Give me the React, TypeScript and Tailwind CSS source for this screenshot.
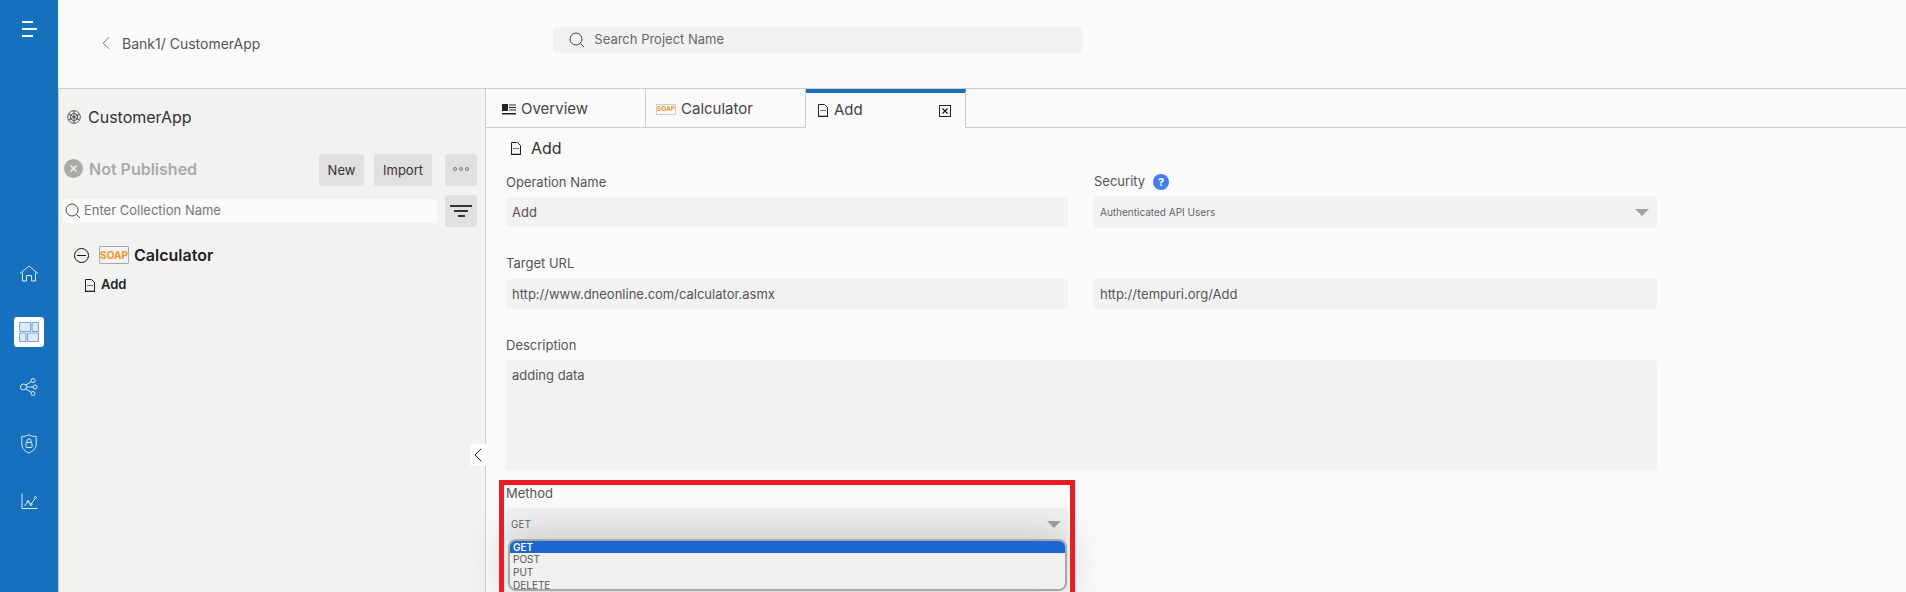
import { ChevronLeft } from "lucide-react";

function Field({ label, value, labelGap = "mt-[6px]" }: { label: string; value: string; labelGap?: string }) {
  return (
    <div>
      <div className="h-[18px] text-[13px] leading-[18px] text-[#555]">{label}</div>
      <div className={labelGap + " h-[30px] rounded-[3px] bg-[#f2f2f2] px-[6px] text-[13px] leading-[30px] text-[#555]"}>{value}</div>
    </div>
  );
}

function Caret() {
  return <div className="h-0 w-0 border-x-[7px] border-t-[7px] border-x-transparent border-t-[#a3a3a3]" />;
}

function SoapIcon({ small }: { small?: boolean }) {
  return (
    <span
      className={
        small
          ? "flex h-[11px] w-[20px] items-center justify-center border border-[#ccc] text-[6.5px] font-bold leading-none text-[#f7941d]"
          : "flex h-[18px] w-[30px] items-center justify-center rounded-[1px] border border-[#aaa] text-[10px] font-bold leading-none text-[#f7941d]"
      }
    >
      SOAP
    </span>
  );
}

function SearchIcon() {
  return (
    <svg width="16" height="16" viewBox="0 0 16 16" fill="none" stroke="#444" strokeWidth="1">
      <circle cx="7" cy="7" r="6" />
      <path d="M11.5 11.5 15 15" />
    </svg>
  );
}

function DocIcon() {
  return (
    <svg width="12" height="13" viewBox="0 0 12 13" fill="none" stroke="#222" strokeWidth="1">
      <path d="M1.5 12.5V.5h6l3 3v9z" />
      <path d="M1 12.5h10" strokeWidth="1.6" />
      <path d="M3 6.5h6" stroke="#777" />
    </svg>
  );
}

function NavIcon({ children, active }: { children: React.ReactNode; active?: boolean }) {
  return (
    <div className={active ? "-mb-[2px] mt-[2px] flex h-[30px] w-[30px] items-center justify-center rounded-[3px] bg-white" : "flex h-[30px] w-[30px] items-center justify-center"}>
      {children}
    </div>
  );
}

export default function App() {
  return (
    <div className="flex h-[592px] w-[1906px] overflow-hidden bg-[#fafafa] font-['Inter',sans-serif]">
      {/* Blue rail */}
      <aside className="flex w-[58px] shrink-0 flex-col items-center bg-[#1570bd]">
        <div className="mt-[21px] flex w-[15px] flex-col items-end gap-[5px]">
          <div className="h-[2px] w-[11px] self-start bg-white" />
          <div className="h-[2px] w-[15px] bg-white" />
          <div className="h-[2px] w-[11px] self-start bg-white" />
        </div>
        <div className="mt-[221px] flex flex-col items-center gap-[27px]">
          <NavIcon>
            <svg width="20" height="17" viewBox="0 0 20 17" fill="none" stroke="#dbeafe" strokeWidth="1">
              <path d="M1 8.5 10 1l9 7.500" />
              <path d="M3.500 7.500V16H7.500V10.500h5V16H16.500V7.500" />
            </svg>
          </NavIcon>
          <NavIcon active>
            <svg width="20" height="20" viewBox="0 0 20 20" fill="#dceafa" stroke="#7aa9d8" strokeWidth="1.200">
              <rect x="0.500" y="0.500" width="11" height="9" rx="1" />
              <rect x="13" y="0.500" width="6.500" height="9" rx="1" />
              <rect x="0.500" y="11" width="6.500" height="8.500" rx="1" />
              <rect x="8.500" y="11" width="11" height="8.500" rx="1" />
            </svg>
          </NavIcon>
          <NavIcon>
            <svg width="18" height="18" viewBox="0 0 18 18" fill="none" stroke="#dbeafe" strokeWidth="1">
              <circle cx="3.500" cy="9" r="3" />
              <circle cx="13" cy="2.500" r="2" />
              <circle cx="15" cy="9" r="2" />
              <circle cx="13" cy="15.500" r="2" />
              <path d="M6.500 9H13M5.800 7 11.400 3.700M5.800 11l5.600 3.300" />
            </svg>
          </NavIcon>
          <NavIcon>
            <svg width="16" height="20" viewBox="0 0 16 20" fill="none" stroke="#dbeafe" strokeWidth="1">
              <path d="M8 .800C5.500 2 3 2.500.800 2.500V10c0 4.500 3.500 7.500 7.200 9 3.700-1.500 7.200-4.500 7.200-9V2.500C13 2.500 10.500 2 8 .800z" />
              <rect x="5" y="8.500" width="6" height="5" rx="1" />
              <path d="M6 8.500V6.800a2 2 0 0 1 4 0v1.700" />
            </svg>
          </NavIcon>
          <NavIcon>
            <svg width="17" height="17" viewBox="0 0 17 17" fill="none" stroke="#dbeafe" strokeWidth="1">
              <path d="M1 .500V15.500H16.500" />
              <path d="M3.500 13 7 8.500l3 3 4-6" />
              <circle cx="7" cy="8.500" r="1" />
              <circle cx="10" cy="11.500" r="1" />
              <circle cx="14.500" cy="4.500" r="1" />
            </svg>
          </NavIcon>
        </div>
      </aside>

      <div className="flex min-w-0 flex-1 flex-col">
        {/* Top bar */}
        <header className="flex h-[89px] shrink-0 border-b border-[#ccc] bg-[#fafafa]">
          <div className="mt-[33px] flex h-[20px] items-center pl-[37px]">
            <ChevronLeft size={22} strokeWidth={0.9} className="text-[#555]" />
            <span className="ml-[5px] text-[14px] text-[#555]">Bank1/ CustomerApp</span>
          </div>
          <div className="ml-[293px] mt-[27px] flex h-[26px] w-[529px] items-center rounded-[4px] bg-[#f2f2f2] pl-[16px]">
            <SearchIcon />
            <span className="ml-[9px] text-[13px] text-[#666]">Search Project Name</span>
          </div>
        </header>

        <div className="flex min-h-0 flex-1">
          {/* Collection sidebar */}
          <section className="w-[427px] shrink-0 border-l border-[#ccc] bg-[#f2f2f2] pl-[4px]">
            <div className="mt-[18px] flex h-[20px] items-center pl-[4px]">
              <svg width="14" height="14" viewBox="0 0 14 14" fill="none" stroke="#444" strokeWidth="0.900">
                <circle cx="7" cy="7" r="6.300" />
                <path d="M7 3 10.500 5v4L7 11 3.500 9V5z" />
                <path d="M7 .700V3M7 11v2.300M1.500 4 3.500 5M10.500 9l2 1M1.500 10l2-1M10.500 5l2-1M7 3v8M3.500 5l7 4M10.500 5l-7 4" />
              </svg>
              <span className="ml-[7px] text-[16px] text-[#333]">CustomerApp</span>
            </div>
            <div className="mt-[27px] flex h-[32px] w-[414px] items-center pl-[1px]">
              <svg className="mb-[3px]" width="19" height="19" viewBox="0 0 19 19">
                <circle cx="9.500" cy="9.500" r="9.500" fill="#aaa" />
                <path d="M6.500 6.500 12.500 12.500M12.500 6.500 6.500 12.500" stroke="#eee" strokeWidth="1.600" />
              </svg>
              <span className="mb-[3px] ml-[6px] text-[16px] font-semibold text-[#aaa]">Not Published</span>
              <div className="ml-auto flex h-[32px] w-[45px] items-center justify-center rounded-[3px] bg-[#e0e0e0] pt-[1px] text-[13px] text-[#333]">New</div>
              <div className="ml-[10px] flex h-[32px] w-[58px] items-center justify-center rounded-[3px] bg-[#e0e0e0] pt-[1px] text-[13px] text-[#333]">Import</div>
              <div className="ml-[13px] flex h-[32px] w-[32px] items-center justify-center gap-[2px] rounded-[3px] bg-[#e0e0e0] pb-[3px]">
                <span className="h-[4px] w-[4px] rounded-full border border-[#777]" />
                <span className="h-[4px] w-[4px] rounded-full border border-[#777]" />
                <span className="h-[4px] w-[4px] rounded-full border border-[#777]" />
              </div>
            </div>
            <div className="mt-[9px] flex h-[32px] w-[414px] items-center justify-between">
              <div className="flex h-[24px] w-[374px] items-center rounded-[4px] bg-[#fafafa] pl-[2px]">
                <SearchIcon />
                <span className="ml-[3px] text-[13px] text-[#777]">Enter Collection Name</span>
              </div>
              <div className="flex h-[32px] w-[32px] flex-col items-center justify-center gap-[3px] rounded-[3px] bg-[#e0e0e0]">
                <div className="h-[2px] w-[22px] bg-[#333]" />
                <div className="h-[2px] w-[14px] bg-[#333]" />
                <div className="h-[2px] w-[7px] bg-[#333]" />
              </div>
            </div>
            <div className="mt-[18px] flex h-[20px] items-center pl-[11px]">
              <svg width="15" height="15" viewBox="0 0 15 15" fill="none" stroke="#111" strokeWidth="1">
                <circle cx="7.500" cy="7.500" r="7" />
                <path d="M3 7.500h9" />
              </svg>
              <span className="ml-[10px]"><SoapIcon /></span>
              <span className="ml-[5px] text-[16px] font-semibold text-[#222]">Calculator</span>
            </div>
            <div className="mt-[11px] flex h-[18px] items-center pl-[21px]">
              <DocIcon />
              <span className="ml-[5px] text-[13px] font-semibold text-[#222]">Add</span>
            </div>
          </section>

          {/* Main area */}
          <main className="relative min-w-0 flex-1 border-l border-[#ccc]">
            <div className="absolute -left-[16px] top-[355px] flex h-[22px] w-[16px] items-center justify-center rounded-l-[2px] bg-white">
              <ChevronLeft size={24} strokeWidth={1} className="shrink-0 text-[#222]" />
            </div>

            <div className="flex h-[39px] border-b border-[#ccc]">
              <div className="flex w-[160px] items-center border-r border-[#ccc] pl-[16px] pt-[2px]">
                <svg width="14" height="11" viewBox="0 0 14 11" fill="#222">
                  <rect x="0" y="0" width="6" height="7" />
                  <rect x="0" y="9" width="14" height="1.500" />
                  <rect x="7" y="0.500" width="7" height="1" />
                  <rect x="7" y="3" width="7" height="1" />
                  <rect x="7" y="5.500" width="7" height="1" />
                </svg>
                <span className="ml-[5px] text-[15px] text-[#444]">Overview</span>
              </div>
              <div className="flex w-[160px] items-center border-r border-[#ccc] pl-[10px] pt-[2px]">
                <SoapIcon small />
                <span className="ml-[5px] text-[15px] text-[#444]">Calculator</span>
              </div>
              <div className="-mb-px flex h-[39px] w-[160px] items-center border-r border-t-[4px] border-[#ccc] border-t-[#1570bd] bg-[#fafafa] pl-[11px]">
                <DocIcon />
                <span className="ml-[5px] text-[15px] text-[#444]">Add</span>
                <svg className="ml-[76px]" width="12" height="12" viewBox="0 0 12 12" fill="none" stroke="#222">
                  <rect x="0.500" y="0.500" width="11" height="11" />
                  <path d="M3.500 3.500 8.500 8.500M8.500 3.500 3.500 8.500" strokeWidth="1.300" />
                </svg>
              </div>
            </div>

            <div className="mt-[10px] flex h-[20px] items-center pl-[24px]">
              <DocIcon />
              <span className="ml-[9px] text-[16px] text-[#333]">Add</span>
            </div>

            <div className="ml-[20px] mt-[15px] w-[1151px]">
              <div className="grid grid-cols-[562px_563px] gap-x-[26px]">
                <Field label="Operation Name" value="Add" />
                <div>
                  <div className="flex h-[18px] items-center text-[13px] text-[#555]">
                    Security
                    <span className="ml-[8px] flex h-[16px] w-[16px] items-center justify-center rounded-full bg-[#3f7df2] text-[11px] font-bold leading-none text-white">?</span>
                  </div>
                  <div className="mt-[5px] flex h-[32px] items-center justify-between rounded-[4px] bg-[#f2f2f2] pl-[6px] pr-[8px] text-[10px] text-[#666]">
                    Authenticated API Users
                    <Caret />
                  </div>
                </div>
              </div>

              <div className="mt-[26px] grid grid-cols-[562px_563px] gap-x-[26px]">
                <Field label="Target URL" value="http://www.dneonline.com/calculator.asmx" labelGap="mt-[7px]" />
                <div className="pt-[25px]">
                  <div className="h-[30px] rounded-[3px] bg-[#f2f2f2] px-[6px] text-[13px] leading-[30px] text-[#555]">http://tempuri.org/Add</div>
                </div>
              </div>

              <div className="mt-[27px]">
                <div className="h-[18px] text-[13px] leading-[18px] text-[#555]">Description</div>
                <div className="mt-[6px] h-[110px] rounded-[3px] bg-[#f2f2f2] px-[6px] pt-[6px] text-[13px] leading-[18px] text-[#555]">adding data</div>
              </div>
            </div>

            {/* Method select with open list, red box drawn over it */}
            <div className="relative ml-[13px] mt-[10px] h-[200px] w-[576px] pl-[7px] pt-[5px]">
              <div className="text-[13px] leading-[16px] text-[#555]">Method</div>
              <div className="mt-[7px] flex h-[33px] w-[562px] items-center justify-between rounded-[4px] bg-[#f0f0f0] pl-[5px] pr-[7px] text-[10px] text-[#666]">
                GET
                <Caret />
              </div>
              <div className="absolute left-[9px] top-[59px] z-10 h-[52px] w-[559px] overflow-hidden rounded-[8px] border-2 border-[#a8a8a8] bg-[#f0f0f0] text-[10px] leading-[13px] text-[#555] shadow-[0_0_40px_rgba(0,0,0,0.22)]">
                <div className="h-[12px] bg-[#1a67d2] pl-[3px] font-semibold leading-[12px] text-white">GET</div>
                <div className="pl-[3px]">POST</div>
                <div className="pl-[3px]">PUT</div>
                <div className="pl-[3px]">DELETE</div>
              </div>
              <div className="pointer-events-none absolute inset-0 z-20 border-[5px] border-[#ed1c24]" />
            </div>
          </main>
        </div>
      </div>
    </div>
  );
}
